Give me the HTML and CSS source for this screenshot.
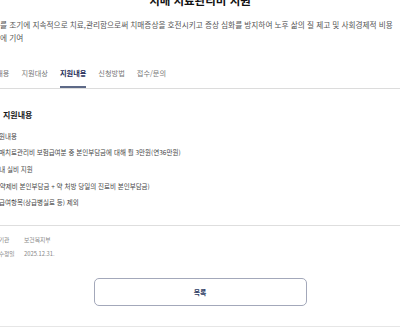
FILE: index.html
```html
<!DOCTYPE html>
<html lang="ko">
<head>
  <meta charset="UTF-8" />
  <meta name="viewport" content="width=device-width, initial-scale=1.0"/>
  <title>치매 치료관리비 지원</title>
  <link rel="stylesheet" href="styles.css">
</head>
<body>

  <div class="detail-page">
    <h1 class="service-title">치매 치료관리비 지원</h1>

    <p class="service-summary">치매환자를 조기에 지속적으로 치료,관리함으로써 치매증상을 호전시키고 증상 심화를 방지하여 노후 삶의 질 제고 및 사회경제적 비용 부담경감에 기여</p>

    <div class="tab-menu">
      <a class="tab-item">사업내용</a>
      <a class="tab-item">지원대상</a>
      <a class="tab-item active">지원내용</a>
      <a class="tab-item">신청방법</a>
      <a class="tab-item">접수/문의</a>
    </div>

    <div class="content-section">
      <h2 class="section-title">지원내용</h2>
      <ul class="info-list">
        <li>지원내용</li>
        <li>치매치료관리비 보험급여분 중 본인부담금에 대해 월 3만원(연36만원)</li>
        <li class="shift-left">상한 내 실비 지원</li>
        <li class="shift-right">(약제비 본인부담금 + 약 처방 당일의 진료비 본인부담금)</li>
        <li>비급여항목(상급병실료 등) 제외</li>
      </ul>
    </div>

    <div class="meta-box">
      <div class="meta-row">
        <span class="meta-label">소관기관</span>
        <span class="meta-value">보건복지부</span>
      </div>
      <div class="meta-row">
        <span class="meta-label">최종수정일</span>
        <span class="meta-value">2025.12.31.</span>
      </div>
    </div>

    <div class="btn-area">
      <button class="btn-list">목록</button>
    </div>
  </div>

</body>
</html>
```

FILE: styles.css
```css
* {
  margin: 0;
  padding: 0;
  box-sizing: border-box;
  font-family: "Noto Sans CJK KR", "Noto Sans", sans-serif;
}

body {
  width: 400px;
  height: 333px;
  overflow: hidden;
  background-color: #fff;
  color: #333;
}

.detail-page {
  width: 456px;
  margin: 0 -28px;
}

.service-title {
  margin-top: -8px;
  font-size: 11.5px;
  line-height: 16px;
  font-weight: 700;
  color: #111;
  text-align: center;
}

.service-summary {
  width: 442px;
  margin-top: 9.5px;
  font-size: 7.65px;
  line-height: 13px;
  color: #555;
  word-break: keep-all;
}

.tab-menu {
  display: flex;
  gap: 12px;
  margin-top: 24.5px;
  padding-left: 11px;
  border-bottom: 1px solid #dcdcdc;
}

.tab-item {
  font-size: 7.2px;
  line-height: 10px;
  padding-bottom: 8px;
  color: #777;
  border-bottom: 2px solid transparent;
}

.tab-item.active {
  color: #1d2b57;
  font-weight: 700;
  border-bottom-color: #5d6987;
}

.content-section {
  padding-left: 31px;
  margin-top: 20px;
}

.section-title {
  font-size: 8px;
  line-height: 12px;
  font-weight: 700;
  color: #1a1a1a;
}

.info-list {
  list-style: none;
  margin-top: 6.6px;
  margin-left: -10px;
}

.info-list li {
  font-size: 6.5px;
  line-height: 16.7px;
  color: #444;
}

.info-list .shift-left {
  margin-left: -7.5px;
}

.info-list .shift-right {
  margin-left: 4.5px;
}

.meta-box {
  margin-top: 13.6px;
  padding-top: 7px;
  border-top: 1px solid #dedede;
}

.meta-row {
  display: flex;
  padding-left: 16px;
  font-size: 5.8px;
  line-height: 14px;
}

.meta-label {
  width: 36px;
  color: #888;
}

.meta-value {
  color: #888;
}

.btn-area {
  display: flex;
  justify-content: center;
  margin-top: 17px;
  padding-bottom: 20px;
  border-bottom: 1px solid #e6e6e6;
}

.btn-list {
  width: 213px;
  height: 28px;
  border: 1px solid #a3a8ba;
  border-radius: 5px;
  background-color: #fff;
  font-size: 6.9px;
  font-weight: 700;
  color: #2b3a62;
  cursor: pointer;
}
```
